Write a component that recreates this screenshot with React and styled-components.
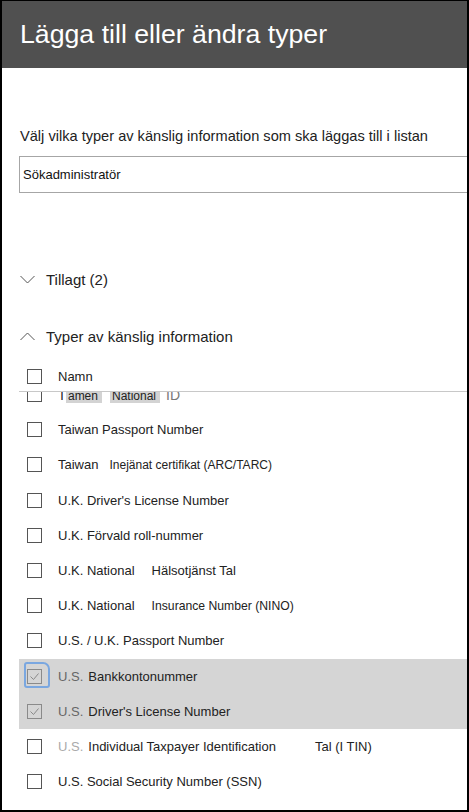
import styled, { createGlobalStyle, css } from "styled-components";

const GlobalStyle = createGlobalStyle`
  body {
    margin: 0;
    font-family: "Liberation Sans", Arial, sans-serif;
    background: #fff;
  }
`;

const Frame = styled.div`
  width: 469px;
  height: 812px;
  box-sizing: border-box;
  border: 2px solid #000;
  border-top-width: 1px;
  display: flex;
  flex-direction: column;
  overflow: hidden;
  background: #fff;
`;

const Header = styled.div`
  height: 67px;
  flex-shrink: 0;
  background: #505050;
  display: flex;
  align-items: center;
  padding-left: 18px;
`;

const Title = styled.h1`
  margin: 0;
  font-size: 26.7px;
  font-weight: 400;
  color: #fff;
`;

const Body = styled.div`
  flex: 1;
  min-height: 0;
  display: flex;
  flex-direction: column;
  padding-left: 17px;
`;

const Instruction = styled.p`
  margin: 58px 0 0 1px;
  font-size: 14.6px;
  line-height: 20px;
  color: #222;
  white-space: nowrap;
`;

const SearchBox = styled.div`
  margin-top: 10px;
  height: 37px;
  box-sizing: border-box;
  border: 1px solid #a6a6a6;
  border-right: none;
  display: flex;
  align-items: center;
  padding-left: 3px;
  font-size: 13px;
  color: #111;
`;

const Toggle = styled.div`
  display: flex;
  align-items: center;
  height: 24px;
  margin-top: ${(p) => p.$top}px;
  font-size: 15px;
  color: #222;
  gap: 11px;
  padding-left: 1px;
`;

const Chevron = ({ up }) => (
  <svg width="15" height="9" viewBox="0 0 15 9" fill="none" stroke="#555" strokeWidth="1">
    {up ? <path d="M0.5 8 L7.5 1 L14.5 8" /> : <path d="M0.5 1 L7.5 8 L14.5 1" />}
  </svg>
);

const ColumnHead = styled.div`
  margin-top: 13px;
  height: 30px;
  display: flex;
  align-items: center;
  padding-left: 8px;
  gap: 16px;
  font-size: 13px;
  color: #222;
`;

const Viewport = styled.div`
  flex: 1;
  min-height: 0;
  overflow: hidden;
  border-top: 1px solid #c8c8c8;
`;

const List = styled.div`
  margin-top: -15px;
`;

const Row = styled.div`
  height: 35.2px;
  display: flex;
  align-items: center;
  padding-left: 8px;
  gap: 16px;
  font-size: 13px;
  color: #222;
  white-space: nowrap;
  background: ${(p) => (p.$selected ? "#d5d5d5" : "transparent")};
`;

const Box = styled.span`
  position: relative;
  width: 15px;
  height: 15px;
  box-sizing: border-box;
  flex-shrink: 0;
  border: 1px solid ${(p) => (p.$checked ? "#8a8a8a" : "#555")};
  background: ${(p) => (p.$checked ? "transparent" : "#fff")};
  display: flex;
  align-items: center;
  justify-content: center;
  ${(p) =>
    p.$focus &&
    css`
      &::after {
        content: "";
        position: absolute;
        left: -4px;
        top: -8px;
        width: 22px;
        height: 22px;
        border: 2px solid #7aa7e0;
        border-radius: 3px;
        border-top-right-radius: 7px;
      }
    `}
`;

const Label = styled.span`
  display: flex;
  align-items: baseline;
`;

const Piece = styled.span`
  font-size: ${(p) => p.$size || 13}px;
  color: ${(p) => p.$color || "#222"};
  margin-left: ${(p) => p.$gap || 0}px;
  background: ${(p) => p.$bg || "transparent"};
  padding: ${(p) => (p.$bg ? "0 4px 0 2px" : "0")};
`;

const Check = () => (
  <svg width="11" height="9" viewBox="0 0 11 9" fill="none" stroke="#8a8a8a" strokeWidth="1">
    <path d="M1.5 4.5 L4.5 7.5 L9.5 1.5" />
  </svg>
);

const rows = [
  { parts: [{ t: "T" }, { t: "amen", size: 12, bg: "#d3d3d3" }, { t: "National", size: 12, bg: "#d3d3d3", gap: 8 }, { t: "ID", gap: 6, color: "#777", size: 14 }] },
  { parts: [{ t: "Taiwan Passport Number" }] },
  { parts: [{ t: "Taiwan" }, { t: "Inejänat certifikat (ARC/TARC)", size: 12, gap: 11 }] },
  { parts: [{ t: "U.K. Driver's License Number" }] },
  { parts: [{ t: "U.K. Förvald roll-nummer" }] },
  { parts: [{ t: "U.K. National" }, { t: "Hälsotjänst Tal", size: 13, gap: 17 }] },
  { parts: [{ t: "U.K. National" }, { t: "Insurance Number (NINO)", size: 12.2, gap: 17 }] },
  { parts: [{ t: "U.S. / U.K. Passport Number" }] },
  { checked: true, focus: true, parts: [{ t: "U.S.", color: "#666" }, { t: "Bankkontonummer", gap: 5 }] },
  { checked: true, parts: [{ t: "U.S.", color: "#666" }, { t: "Driver's License Number", gap: 5 }] },
  { parts: [{ t: "U.S.", color: "#aaa" }, { t: "Individual Taxpayer Identification", gap: 5 }, { t: "Tal (I TIN)", gap: 39 }] },
  { parts: [{ t: "U.S. Social Security Number (SSN)" }] },
];

export default function App() {
  return (
    <>
      <GlobalStyle />
      <Frame>
        <Header>
          <Title>Lägga till eller ändra typer</Title>
        </Header>
        <Body>
          <Instruction>Välj vilka typer av känslig information som ska läggas till i listan</Instruction>
          <SearchBox>Sökadministratör</SearchBox>
          <Toggle $top={74}>
            <Chevron />
            Tillagt (2)
          </Toggle>
          <Toggle $top={33}>
            <Chevron up />
            Typer av känslig information
          </Toggle>
          <ColumnHead>
            <Box />
            Namn
          </ColumnHead>
          <Viewport>
            <List>
              {rows.map((r, i) => (
                <Row key={i} $selected={r.checked}>
                  <Box $checked={r.checked} $focus={r.focus}>
                    {r.checked && <Check />}
                  </Box>
                  <Label>
                    {r.parts.map((p, j) => (
                      <Piece key={j} $size={p.size} $color={p.color} $gap={p.gap} $bg={p.bg}>
                        {p.t}
                      </Piece>
                    ))}
                  </Label>
                </Row>
              ))}
            </List>
          </Viewport>
        </Body>
      </Frame>
    </>
  );
}
